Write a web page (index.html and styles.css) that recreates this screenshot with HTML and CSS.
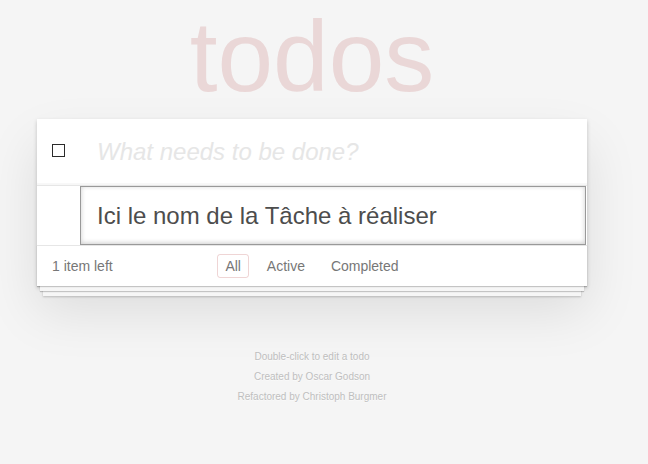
FILE: index.html
```html
<!DOCTYPE html>
<html lang="fr">
<head>
<meta charset="utf-8">
<title>todos</title>
<link rel="stylesheet" href="styles.css">
</head>
<body>
<div class="page">
  <h1 class="title">todos</h1>
  <section class="todoapp">
    <header class="header">
      <input class="toggle-all" type="checkbox">
      <input class="new-todo" placeholder="What needs to be done?">
    </header>
    <section class="main">
      <ul class="todo-list">
        <li class="editing"><input class="edit" value="Ici le nom de la Tâche à réaliser"></li>
      </ul>
    </section>
    <footer class="footer">
      <span class="todo-count">1 item left</span>
      <ul class="filters">
        <li><a class="selected" href="#/">All</a></li>
        <li><a href="#/active">Active</a></li>
        <li><a href="#/completed">Completed</a></li>
      </ul>
      <span class="spacer"></span>
    </footer>
  </section>
  <footer class="info">
    <p>Double-click to edit a todo</p>
    <p>Created by Oscar Godson</p>
    <p>Refactored by Christoph Burgmer</p>
  </footer>
</div>
</body>
</html>
```
FILE: styles.css
```css
html, body {
  margin: 0;
  padding: 0;
}
body {
  font: 14px "Liberation Sans", Arial, sans-serif;
  line-height: 1.4em;
  background: #f5f5f5;
  color: #4d4d4d;
}
.page {
  width: 550px;
  margin-left: 37px;
  padding-top: 6px;
}
.title {
  margin: 0;
  height: 100px;
  font-size: 100px;
  line-height: 100px;
  font-weight: normal;
  text-align: center;
  color: rgba(175, 47, 47, 0.15);
}
.todoapp {
  margin-top: 13px;
  background: #fff;
  position: relative;
  box-shadow: 0 2px 4px 0 rgba(0, 0, 0, 0.2), 0 25px 50px 0 rgba(0, 0, 0, 0.1);
}
.header {
  display: flex;
  align-items: flex-start;
  box-shadow: inset 0 -2px 1px rgba(0, 0, 0, 0.03);
}
.toggle-all {
  appearance: none;
  -webkit-appearance: none;
  flex: none;
  width: 13px;
  height: 13px;
  margin: 25px 0 0 15px;
  border: 1px solid #2b2b2b;
  background: #fff;
  box-sizing: border-box;
}
.new-todo, .edit {
  margin: 0;
  font-family: inherit;
  font-size: 24px;
  line-height: 1.4em;
  color: inherit;
  box-sizing: border-box;
  outline: none;
}
.new-todo {
  flex: 1;
  min-width: 0;
  padding: 16px 16px 16px 32px;
  border: none;
  background: transparent;
  height: 66px;
}
.new-todo::placeholder {
  font-style: italic;
  color: #e6e6e6;
}
.main {
  border-top: 1px solid #e6e6e6;
}
.todo-list {
  margin: 0;
  padding: 0;
  list-style: none;
}
.edit {
  display: block;
  width: 506px;
  height: 59px;
  margin: 0 0 0 43px;
  padding: 12px 16px;
  border: 1px solid #999;
  background: #fff;
  box-shadow: inset 0 -1px 5px 0 rgba(0, 0, 0, 0.2);
}
.footer {
  position: relative;
  display: grid;
  grid-template-columns: 1fr auto 1fr;
  color: #777;
  padding: 11px 15px 9px;
  height: 20px;
  border-top: 1px solid #e6e6e6;
  box-shadow: 0 1px 1px rgba(0, 0, 0, 0.2),
    0 8px 0 -3px #f6f6f6,
    0 9px 1px -3px rgba(0, 0, 0, 0.2),
    0 16px 0 -6px #f6f6f6,
    0 17px 2px -6px rgba(0, 0, 0, 0.2);
}
.todo-count {
  text-align: left;
}
.filters {
  margin: 0;
  padding: 0;
  list-style: none;
  white-space: nowrap;
}
.filters li {
  display: inline;
}
.filters a {
  color: inherit;
  margin: 3px;
  padding: 3px 7px;
  text-decoration: none;
  border: 1px solid transparent;
  border-radius: 3px;
}
.filters a.selected {
  border-color: rgba(175, 47, 47, 0.2);
}
.info {
  margin-top: 66px;
  color: #bfbfbf;
  font-size: 10px;
  text-shadow: 0 1px 0 rgba(255, 255, 255, 0.5);
  text-align: center;
}
.info p {
  line-height: 1;
  margin: 10px 0;
}
```
